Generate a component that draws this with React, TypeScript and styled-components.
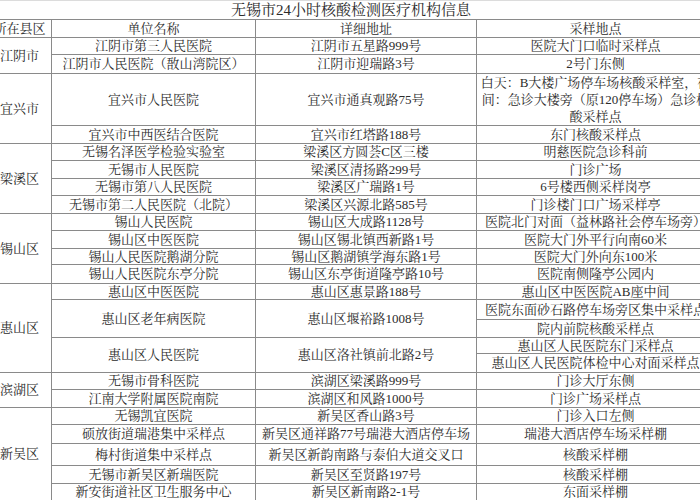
import { createGlobalStyle } from "styled-components";
import styled from "styled-components";

const GlobalStyle = createGlobalStyle`
    html, body {
        margin: 0;
        padding: 0;
        background: #ffffff;
    }
    body {
        font-family: "Liberation Serif", "Noto Serif CJK SC", "Noto Sans CJK SC", serif;
        color: #2b2b2b;
    }
`;

const Page = styled.div`
    width: 700px;
    height: 500px;
    overflow: hidden;
`;

const Table = styled.table`
    margin-left: -13px;
    width: 727px;
    table-layout: fixed;
    border-collapse: collapse;
    font-size: 13px;
    line-height: 14px;
`;

const TitleCell = styled.td`
    height: 18px;
    padding: 0;
    border-top: 1px solid #dcdcdc;
    border-bottom: 1px solid #8a8a8a;
    font-size: 15px;
    line-height: 17px;
    text-align: center;
    vertical-align: middle;
    white-space: nowrap;
`;

const Cell = styled.td<{ $h?: number }>`
    height: ${({ $h }) => ($h ? `${$h}px` : "auto")};
    padding: 0 2px;
    border: 1px solid #8a8a8a;
    text-align: center;
    vertical-align: middle;
    white-space: nowrap;
    overflow: hidden;
`;

const WrapCell = styled(Cell)`
    white-space: normal;
    overflow: visible;
    line-height: 17px;
`;

type Row = {
    h: number;
    area?: [string, number];
    name?: [string, number];
    addr?: [string, number];
    spot: string;
    wrap?: boolean;
};

const rows: Row[] = [
    { h: 16, area: ["江阴市", 2], name: ["江阴市第三人民医院", 1], addr: ["江阴市五星路999号", 1], spot: "医院大门口临时采样点" },
    { h: 18, name: ["江阴市人民医院（敔山湾院区）", 1], addr: ["江阴市迎瑞路3号", 1], spot: "2号门东侧" },
    { h: 51, area: ["宜兴市", 2], name: ["宜兴市人民医院", 1], addr: ["宜兴市通真观路75号", 1], spot: "白天：B大楼广场停车场核酸采样室，夜间：急诊大楼旁（原120停车场）急诊核酸采样点", wrap: true },
    { h: 17, name: ["宜兴市中西医结合医院", 1], addr: ["宜兴市红塔路188号", 1], spot: "东门核酸采样点" },
    { h: 16, area: ["梁溪区", 4], name: ["无锡名泽医学检验实验室", 1], addr: ["梁溪区方圆荟C区三楼", 1], spot: "明慈医院急诊科前" },
    { h: 17, name: ["无锡市人民医院", 1], addr: ["梁溪区清扬路299号", 1], spot: "门诊广场" },
    { h: 16, name: ["无锡市第八人民医院", 1], addr: ["梁溪区广瑞路1号", 1], spot: "6号楼西侧采样岗亭" },
    { h: 17, name: ["无锡市第二人民医院（北院）", 1], addr: ["梁溪区兴源北路585号", 1], spot: "门诊楼门口广场采样亭" },
    { h: 16, area: ["锡山区", 4], name: ["锡山人民医院", 1], addr: ["锡山区大成路1128号", 1], spot: "医院北门对面（益林路社会停车场旁）" },
    { h: 17, name: ["锡山区中医医院", 1], addr: ["锡山区锡北镇西新路1号", 1], spot: "医院大门外平行向南60米" },
    { h: 15, name: ["锡山人民医院鹅湖分院", 1], addr: ["锡山区鹅湖镇学海东路1号", 1], spot: "医院大门外向东100米" },
    { h: 18, name: ["锡山人民医院东亭分院", 1], addr: ["锡山区东亭街道隆亭路10号", 1], spot: "医院南侧隆亭公园内" },
    { h: 15, area: ["惠山区", 5], name: ["惠山区中医医院", 1], addr: ["惠山区惠景路188号", 1], spot: "惠山区中医医院AB座中间" },
    { h: 19, name: ["惠山区老年病医院", 2], addr: ["惠山区堰裕路1008号", 2], spot: "医院东面砂石路停车场旁区集中采样点" },
    { h: 17, spot: "院内前院核酸采样点" },
    { h: 15, name: ["惠山区人民医院", 2], addr: ["惠山区洛社镇前北路2号", 2], spot: "惠山区人民医院东门采样点" },
    { h: 18, spot: "惠山区人民医院体检中心对面采样点" },
    { h: 16, area: ["滨湖区", 2], name: ["无锡市骨科医院", 1], addr: ["滨湖区梁溪路999号", 1], spot: "门诊大厅东侧" },
    { h: 17, name: ["江南大学附属医院南院", 1], addr: ["滨湖区和风路1000号", 1], spot: "门诊广场采样点" },
    { h: 16, area: ["新吴区", 5], name: ["无锡凯宜医院", 1], addr: ["新吴区香山路3号", 1], spot: "门诊入口左侧" },
    { h: 18, name: ["硕放街道瑞港集中采样点", 1], addr: ["新吴区通祥路77号瑞港大酒店停车场", 1], spot: "瑞港大酒店停车场采样棚" },
    { h: 21, name: ["梅村街道集中采样点", 1], addr: ["新吴区新韵南路与泰伯大道交叉口", 1], spot: "核酸采样棚" },
    { h: 17, name: ["无锡市新吴区新瑞医院", 1], addr: ["新吴区至贤路197号", 1], spot: "核酸采样棚" },
    { h: 16, name: ["新安街道社区卫生服务中心", 1], addr: ["新吴区新南路2-1号", 1], spot: "东面采样棚" },
];

export default function App() {
    return (
        <Page>
            <GlobalStyle />
            <Table>
                <colgroup>
                    <col style={{ width: 64 }} />
                    <col style={{ width: 204 }} />
                    <col style={{ width: 221 }} />
                    <col style={{ width: 238 }} />
                </colgroup>
                <tbody>
                    <tr>
                        <TitleCell colSpan={4}>无锡市24小时核酸检测医疗机构信息</TitleCell>
                    </tr>
                    <tr>
                        <Cell $h={17}>所在县区</Cell>
                        <Cell>单位名称</Cell>
                        <Cell>详细地址</Cell>
                        <Cell>采样地点</Cell>
                    </tr>
                    {rows.map((r, i) => (
                        <tr key={i}>
                            {r.area && <Cell rowSpan={r.area[1]}>{r.area[0]}</Cell>}
                            {r.name && <Cell rowSpan={r.name[1]}>{r.name[0]}</Cell>}
                            {r.addr && <Cell rowSpan={r.addr[1]}>{r.addr[0]}</Cell>}
                            {r.wrap ? (
                                <WrapCell $h={r.h}>{r.spot}</WrapCell>
                            ) : (
                                <Cell $h={r.h}>{r.spot}</Cell>
                            )}
                        </tr>
                    ))}
                </tbody>
            </Table>
        </Page>
    );
}
